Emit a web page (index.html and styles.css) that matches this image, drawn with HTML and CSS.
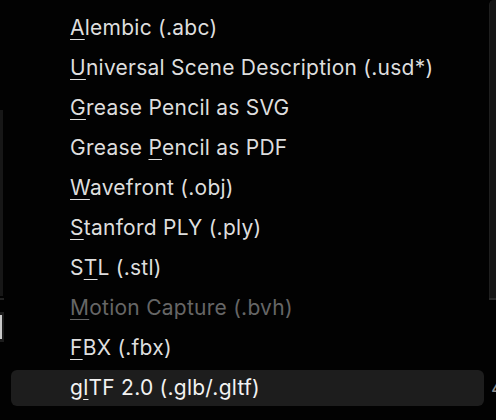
FILE: index.html
```html
<!DOCTYPE html>
<html>
<head>
<meta charset="utf-8">
<link rel="stylesheet" href="styles.css">
</head>
<body>
<div class="page">
  <div class="edge edge-left">
    <div class="l-panel"></div>
    <div class="l-line"></div>
    <div class="l-field"><div class="l-white"></div></div>
    <div class="l-num">1</div>
  </div>
  <ul class="menu">
    <li class="item"><span class="u">A</span>lembic (.abc)</li>
    <li class="item"><span class="u">U</span>niversal Scene Description (.usd*)</li>
    <li class="item"><span class="u">G</span>rease Pencil as SVG</li>
    <li class="item">Grease <span class="u">P</span>encil as PDF</li>
    <li class="item"><span class="u">W</span>avefront (.obj)</li>
    <li class="item"><span class="u">S</span>tanford PLY (.ply)</li>
    <li class="item">S<span class="u">T</span>L (.stl)</li>
    <li class="item disabled"><span class="u">M</span>otion Capture (.bvh)</li>
    <li class="item"><span class="u">F</span>BX (.fbx)</li>
    <li class="item active">g<span class="u">l</span>TF 2.0 (.glb/.gltf)</li>
  </ul>
  <div class="edge edge-right">
    <div class="r-panel"></div>
    <div class="r-line"></div>
    <div class="r-num">4</div>
  </div>
</div>
</body>
</html>
```

FILE: styles.css
```css
html, body {
  margin: 0;
  padding: 0;
  background: #020202;
}
body {
  width: 496px;
  height: 420px;
  overflow: hidden;
  font-family: "Inter", "Noto Sans", sans-serif;
}
.page {
  display: flex;
  height: 420px;
}
.edge {
  display: flex;
  flex-direction: column;
  flex: none;
}
.edge-left {
  width: 4px;
}
.l-panel {
  margin-top: 110px;
  height: 186px;
  width: 3px;
  background: #171717;
}
.l-line {
  margin-top: 2px;
  height: 2px;
  width: 4px;
  background: #222;
}
.l-field {
  margin-top: 12px;
  height: 30px;
  width: 4px;
  background: #1c1c1c;
  display: flex;
  align-items: center;
}
.l-white {
  width: 2px;
  height: 24px;
  background: #c9c9c9;
}
.l-num {
  margin-top: 26px;
  color: #8a8a8a;
  font-size: 20px;
  line-height: 20px;
  margin-left: -9px;
}
.menu {
  list-style: none;
  margin: 0;
  padding: 10px 0 0 0;
  flex: 1;
  display: flex;
  flex-direction: column;
  gap: 4px;
}
.item {
  height: 36px;
  line-height: 36px;
  margin-left: 7px;
  margin-right: 3px;
  padding-left: 59px;
  border-radius: 6px;
  color: #dedede;
  font-size: 21px;
  letter-spacing: 0.25px;
  white-space: nowrap;
}
.item.disabled {
  color: #666666;
}
.item.active {
  background: #1d1d1d;
  color: #f2f2f2;
}
.u {
  text-decoration: underline;
  text-decoration-thickness: 1px;
  text-underline-offset: 4px;
}
.edge-right {
  width: 9px;
  align-items: flex-end;
}
.r-panel {
  width: 6px;
  height: 298px;
  background: #161616;
  border-top-left-radius: 5px;
  border-left: 1px solid #1f1f1f;
}
.r-line {
  width: 7px;
  height: 2px;
  background: #2a2a2a;
}
.r-num {
  margin-top: 78px;
  color: #8a8a8a;
  font-size: 20px;
  line-height: 20px;
  width: 5px;
  overflow: hidden;
  align-self: flex-end;
}
```
